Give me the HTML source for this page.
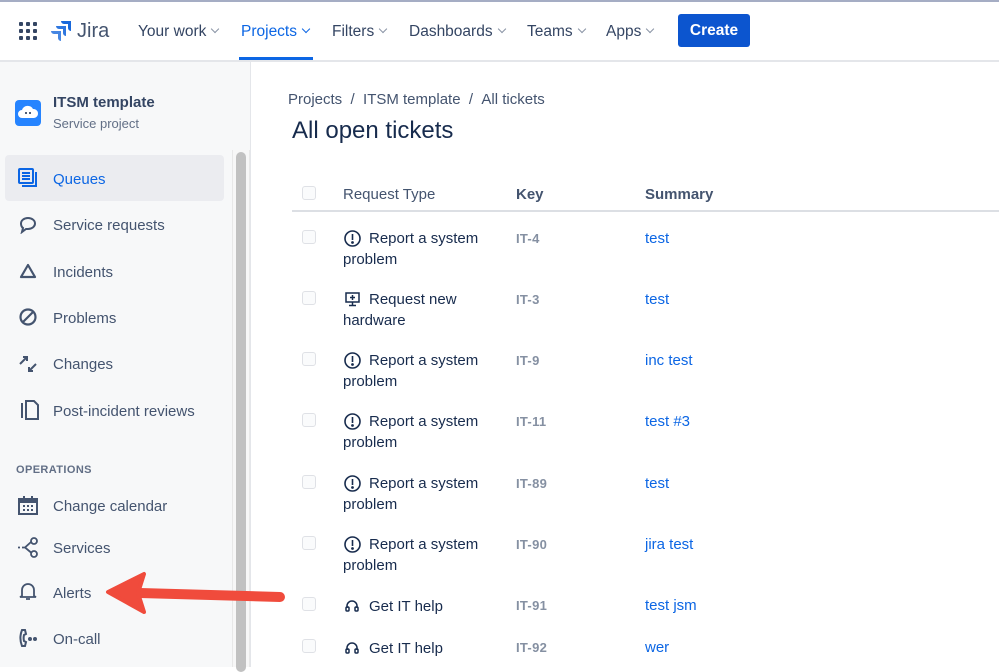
<!DOCTYPE html>
<html><head><meta charset="utf-8"><style>
*{margin:0;padding:0;box-sizing:border-box}
body{width:999px;height:667px;overflow:hidden;background:#fff;font-family:"Liberation Sans",sans-serif;color:#172b4d;position:relative}
.a{position:absolute;white-space:nowrap}
.nav{font-size:15.5px;color:#344563;top:23px}
.chev{display:inline-block;width:6px;height:6px;border-right:1.5px solid #8993a4;border-bottom:1.5px solid #8993a4;transform:rotate(45deg);margin-left:6px;position:relative;top:-4px}
.side{font-size:15px;color:#44546f}
.cb{position:absolute;left:302px;width:14px;height:14px;border:1.5px solid #dfe1e6;border-radius:3px;background:#fafbfc}
.rt{font-size:15px;color:#172b4d}
.key{font-size:13px;color:#8590a2;font-weight:bold;letter-spacing:.3px}
.sum{font-size:15px;color:#0c66e4}
</style></head><body>
<div class="a" style="left:0;top:0;width:999px;height:2px;background:#a5adc4"></div>
<svg class="a" style="left:19px;top:22px" width="18" height="18" viewBox="0 0 18 18" fill="#344563">
<rect x="0" y="0" width="4" height="4" rx="1"/><rect x="7" y="0" width="4" height="4" rx="1"/><rect x="14" y="0" width="4" height="4" rx="1"/>
<rect x="0" y="7" width="4" height="4" rx="1"/><rect x="7" y="7" width="4" height="4" rx="1"/><rect x="14" y="7" width="4" height="4" rx="1"/>
<rect x="0" y="14" width="4" height="4" rx="1"/><rect x="7" y="14" width="4" height="4" rx="1"/><rect x="14" y="14" width="4" height="4" rx="1"/></svg>
<svg class="a" style="left:51px;top:20px" width="21" height="21" viewBox="0 0 21 21" fill="#1868db">
<path d="M10 1h10v10a3 3 0 0 1-3-3V4h-4a3 3 0 0 1-3-3z"/><path d="M5 6h10v10a3 3 0 0 1-3-3V9H8a3 3 0 0 1-3-3z" opacity=".9"/><path d="M0 11h10v10a3 3 0 0 1-3-3v-4H3a3 3 0 0 1-3-3z" opacity=".8"/></svg>
<div class="a" style="left:77px;top:20px;font-size:20px;color:#44546f">Jira</div>
<div class="a nav" style="left:138px">Your work<span class="chev"></span></div>
<div class="a nav" style="left:241px;color:#0c66e4">Projects<span class="chev" style="border-color:#0c66e4"></span></div>
<div class="a" style="left:239px;top:57px;width:74px;height:3px;background:#0c66e4"></div>
<div class="a nav" style="left:332px">Filters<span class="chev"></span></div>
<div class="a nav" style="left:409px">Dashboards<span class="chev"></span></div>
<div class="a nav" style="left:527px">Teams<span class="chev"></span></div>
<div class="a nav" style="left:606px">Apps<span class="chev"></span></div>
<div class="a" style="left:678px;top:14px;width:72px;height:33px;background:#0c55cf;border-radius:3px;color:#fff;font-size:15.5px;font-weight:bold;text-align:center;line-height:34px">Create</div>
<div class="a" style="left:0;top:60px;width:999px;height:2px;background:#e4e6ea"></div>
<div class="a" style="left:0;top:62px;width:251px;height:605px;background:#f7f8f9;border-right:1px solid #e4e6ea"></div>
<div class="a" style="left:232px;top:150px;width:18px;height:517px;border-left:1px solid #e8e8e8;border-right:1px solid #e8e8e8;background:#f7f7f7"></div>
<div class="a" style="left:236px;top:152px;width:10px;height:520px;background:#c1c1c1;border-radius:5px"></div>
<div class="a" style="left:15px;top:100px;width:26px;height:26px;background:#2684ff;border-radius:4px"></div>
<svg class="a" style="left:17px;top:104px" width="22" height="16" viewBox="0 0 22 16"><path d="M5 14a4 4 0 0 1 0-8 6 6 0 0 1 11-1 4.5 4.5 0 0 1 1 9z" fill="#fff"/><circle cx="9" cy="9" r="1" fill="#172b4d"/><circle cx="13" cy="9" r="1" fill="#172b4d"/></svg>
<div class="a" style="left:53px;top:94px;font-size:15px;font-weight:bold;color:#344563">ITSM template</div>
<div class="a" style="left:53px;top:116px;font-size:13px;color:#626f86">Service project</div>
<div class="a" style="left:5px;top:155px;width:219px;height:46px;background:#ebecf0;border-radius:4px"></div>
<svg class="a" style="left:18px;top:168px" width="20" height="20" viewBox="0 0 20 20" fill="none" stroke="#0c66e4" stroke-width="2"><rect x="1" y="1" width="14" height="14" rx="1"/><path d="M4 5h8M4 8h8M4 11h8M18 4v14H4"/></svg>
<div class="a side" style="left:53px;top:171px;color:#0c66e4">Queues</div>
<svg class="a" style="left:19px;top:216px" width="18" height="18" viewBox="0 0 18 18" fill="none" stroke="#44546f" stroke-width="2"><path d="M9 2c4 0 7 2.5 7 5.5S13 13 9 13H7l-4 3 1-4C2.5 11 2 9 2 7.5 2 4.5 5 2 9 2z"/></svg>
<div class="a side" style="left:53px;top:217px">Service requests</div>
<svg class="a" style="left:19px;top:263px" width="18" height="16" viewBox="0 0 18 16" fill="none" stroke="#44546f" stroke-width="2.2"><path d="M9 2L2 14h14z" stroke-linejoin="round"/></svg>
<div class="a side" style="left:53px;top:264px">Incidents</div>
<svg class="a" style="left:19px;top:308px" width="18" height="18" viewBox="0 0 18 18" fill="none" stroke="#44546f" stroke-width="2.2"><circle cx="9" cy="9" r="7.5"/><path d="M4 14L14 4"/></svg>
<div class="a side" style="left:53px;top:310px">Problems</div>
<svg class="a" style="left:18px;top:354px" width="20" height="20" viewBox="0 0 20 20" fill="none" stroke="#44546f" stroke-width="2"><path d="M2 10l7-7M5 3h4v4M18 10l-7 7M15 17h-4v-4"/></svg>
<div class="a side" style="left:53px;top:356px">Changes</div>
<svg class="a" style="left:18px;top:400px" width="22" height="20" viewBox="0 0 22 20" fill="none" stroke="#44546f" stroke-width="2"><path d="M4 3v15M8 1h8l4 4v14H8z"/></svg>
<div class="a side" style="left:53px;top:403px">Post-incident reviews</div>
<div class="a" style="left:16px;top:464px;font-size:11px;font-weight:bold;color:#626f86;letter-spacing:.4px">OPERATIONS</div>
<svg class="a" style="left:18px;top:496px" width="20" height="19" viewBox="0 0 20 19" fill="#44546f"><path d="M1 3h18v15H1z" fill="none" stroke="#44546f" stroke-width="2"/><rect x="1" y="3" width="18" height="4"/><rect x="5" y="0" width="2" height="4"/><rect x="13" y="0" width="2" height="4"/><rect x="5" y="9" width="2" height="2"/><rect x="9" y="9" width="2" height="2"/><rect x="13" y="9" width="2" height="2"/><rect x="5" y="13" width="2" height="2"/><rect x="9" y="13" width="2" height="2"/><rect x="13" y="13" width="2" height="2"/></svg>
<div class="a side" style="left:53px;top:498px">Change calendar</div>
<svg class="a" style="left:17px;top:537px" width="22" height="22" viewBox="0 0 22 22" fill="none" stroke="#44546f" stroke-width="1.8"><circle cx="17" cy="4" r="3"/><circle cx="17" cy="17" r="3"/><path d="M14 5l-6 5.5 6 5M1 10.5h2M5 10.5h3"/></svg>
<div class="a side" style="left:53px;top:540px">Services</div>
<svg class="a" style="left:19px;top:581px" width="18" height="20" viewBox="0 0 18 20" fill="none" stroke="#44546f" stroke-width="1.8"><path d="M3 15V9a6 6 0 0 1 12 0v6l2 1H1zM7 18h4"/></svg>
<div class="a side" style="left:53px;top:585px">Alerts</div>
<svg class="a" style="left:18px;top:628px" width="22" height="20" viewBox="0 0 22 20" fill="none" stroke="#44546f" stroke-width="2"><path d="M7 2H4c-2 5-2 11 0 16h3l1-4-2-1c-.5-2-.5-4 0-6l2-1z"/><circle cx="12" cy="11" r="1" fill="#44546f"/><circle cx="17" cy="11" r="1" fill="#44546f"/></svg>
<div class="a side" style="left:53px;top:631px">On-call</div>
<svg class="a" style="left:100px;top:568px" width="190" height="50" viewBox="0 0 190 50"><path d="M180 29L40 25" stroke="#f04b3c" stroke-width="10" stroke-linecap="round"/><path d="M8 24L44 6 38 25 44 44z" fill="#f04b3c" stroke="#f04b3c" stroke-width="4" stroke-linejoin="round"/></svg>
<div class="a" style="left:288px;top:91px;font-size:15px;color:#44546f">Projects&nbsp;&nbsp;/&nbsp;&nbsp;ITSM template&nbsp;&nbsp;/&nbsp;&nbsp;All tickets</div>
<div class="a" style="left:292px;top:117px;font-size:24px;color:#172b4d">All open tickets</div>
<div class="cb" style="top:186px"></div>
<div class="a" style="left:343px;top:186px;font-size:15px;color:#44546f">Request Type</div>
<div class="a" style="left:516px;top:186px;font-size:15px;color:#44546f;font-weight:bold">Key</div>
<div class="a" style="left:645px;top:186px;font-size:15px;color:#44546f;font-weight:bold">Summary</div>
<div class="a" style="left:292px;top:210px;width:707px;height:2px;background:#dcdfe4"></div>

<div class="cb" style="top:230px"></div>
<svg class="a" style="left:344px;top:230px" width="17" height="17" viewBox="0 0 17 17" fill="none" stroke="#172b4d" stroke-width="1.6"><circle cx="8.5" cy="8.5" r="7.5"/><path d="M8.5 4v6"/><circle cx="8.5" cy="12.5" r=".6" fill="#172b4d"/></svg>
<div class="a rt" style="left:369px;top:230px">Report a system</div><div class="a rt" style="left:343px;top:251px">problem</div>
<div class="a key" style="left:516px;top:231px">IT-4</div><div class="a sum" style="left:645px;top:230px">test</div>

<div class="cb" style="top:291px"></div>
<svg class="a" style="left:345px;top:292px" width="15" height="15" viewBox="0 0 15 15" fill="none" stroke="#172b4d" stroke-width="1.5"><rect x="1" y="1" width="13" height="9"/><path d="M7.5 3v5M5 5.5h5M7.5 10v3M4 13.5h7"/></svg>
<div class="a rt" style="left:369px;top:291px">Request new</div><div class="a rt" style="left:343px;top:312px">hardware</div>
<div class="a key" style="left:516px;top:292px">IT-3</div><div class="a sum" style="left:645px;top:291px">test</div>

<div class="cb" style="top:352px"></div>
<svg class="a" style="left:344px;top:352px" width="17" height="17" viewBox="0 0 17 17" fill="none" stroke="#172b4d" stroke-width="1.6"><circle cx="8.5" cy="8.5" r="7.5"/><path d="M8.5 4v6"/><circle cx="8.5" cy="12.5" r=".6" fill="#172b4d"/></svg>
<div class="a rt" style="left:369px;top:352px">Report a system</div><div class="a rt" style="left:343px;top:373px">problem</div>
<div class="a key" style="left:516px;top:353px">IT-9</div><div class="a sum" style="left:645px;top:352px">inc test</div>

<div class="cb" style="top:413px"></div>
<svg class="a" style="left:344px;top:413px" width="17" height="17" viewBox="0 0 17 17" fill="none" stroke="#172b4d" stroke-width="1.6"><circle cx="8.5" cy="8.5" r="7.5"/><path d="M8.5 4v6"/><circle cx="8.5" cy="12.5" r=".6" fill="#172b4d"/></svg>
<div class="a rt" style="left:369px;top:413px">Report a system</div><div class="a rt" style="left:343px;top:434px">problem</div>
<div class="a key" style="left:516px;top:414px">IT-11</div><div class="a sum" style="left:645px;top:413px">test #3</div>

<div class="cb" style="top:475px"></div>
<svg class="a" style="left:344px;top:475px" width="17" height="17" viewBox="0 0 17 17" fill="none" stroke="#172b4d" stroke-width="1.6"><circle cx="8.5" cy="8.5" r="7.5"/><path d="M8.5 4v6"/><circle cx="8.5" cy="12.5" r=".6" fill="#172b4d"/></svg>
<div class="a rt" style="left:369px;top:475px">Report a system</div><div class="a rt" style="left:343px;top:496px">problem</div>
<div class="a key" style="left:516px;top:476px">IT-89</div><div class="a sum" style="left:645px;top:475px">test</div>

<div class="cb" style="top:536px"></div>
<svg class="a" style="left:344px;top:536px" width="17" height="17" viewBox="0 0 17 17" fill="none" stroke="#172b4d" stroke-width="1.6"><circle cx="8.5" cy="8.5" r="7.5"/><path d="M8.5 4v6"/><circle cx="8.5" cy="12.5" r=".6" fill="#172b4d"/></svg>
<div class="a rt" style="left:369px;top:536px">Report a system</div><div class="a rt" style="left:343px;top:557px">problem</div>
<div class="a key" style="left:516px;top:537px">IT-90</div><div class="a sum" style="left:645px;top:536px">jira test</div>

<div class="cb" style="top:597px"></div>
<svg class="a" style="left:345px;top:599px" width="14" height="14" viewBox="0 0 14 14" fill="none" stroke="#172b4d" stroke-width="1.5"><path d="M2 9V7a5 5 0 0 1 10 0v2"/><rect x="1" y="8" width="3" height="4" rx="1"/><rect x="10" y="8" width="3" height="4" rx="1"/></svg>
<div class="a rt" style="left:369px;top:598px">Get IT help</div>
<div class="a key" style="left:516px;top:598px">IT-91</div><div class="a sum" style="left:645px;top:597px">test jsm</div>

<div class="cb" style="top:639px"></div>
<svg class="a" style="left:345px;top:641px" width="14" height="14" viewBox="0 0 14 14" fill="none" stroke="#172b4d" stroke-width="1.5"><path d="M2 9V7a5 5 0 0 1 10 0v2"/><rect x="1" y="8" width="3" height="4" rx="1"/><rect x="10" y="8" width="3" height="4" rx="1"/></svg>
<div class="a rt" style="left:369px;top:640px">Get IT help</div>
<div class="a key" style="left:516px;top:640px">IT-92</div><div class="a sum" style="left:645px;top:639px">wer</div>
</body></html>
